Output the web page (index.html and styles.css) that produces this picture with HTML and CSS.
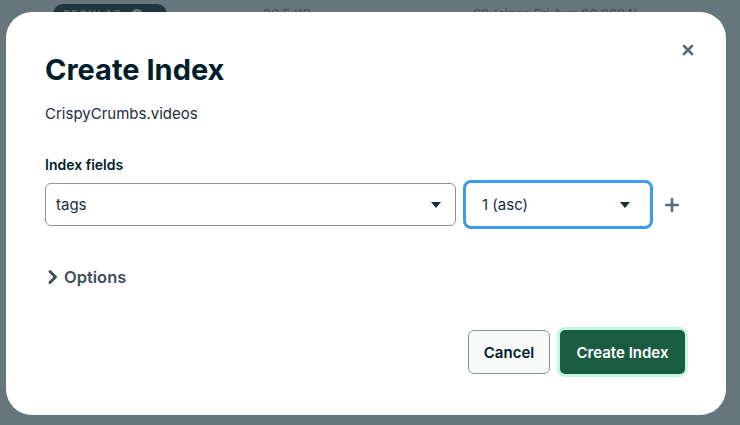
FILE: index.html
```html
<!DOCTYPE html>
<html>
<head>
<meta charset="utf-8">
<link rel="stylesheet" href="styles.css">
</head>
<body>
<div class="backdrop-row">
  <span class="badge">REGULAR <span class="badge-i">i</span></span>
  <span class="bg-size">20.5 KB</span>
  <span class="bg-usage">96 (since Fri Aug 02 2024)</span>
</div>
<div class="modal">
  <button class="close" aria-label="Close">
    <svg width="12" height="12" viewBox="0 0 12 12"><path d="M2 2 L10 10 M10 2 L2 10" stroke="#5c6c75" stroke-width="2.6" stroke-linecap="round"/></svg>
  </button>
  <h1 class="title">Create Index</h1>
  <div class="ns">CrispyCrumbs.videos</div>
  <div class="label">Index fields</div>
  <div class="fields">
    <div class="select field">
      <span>tags</span>
      <svg class="caret" width="10" height="6" viewBox="0 0 10 6"><path d="M0 0 H10 L5 6 Z" fill="#1c2d38"/></svg>
    </div>
    <div class="select type">
      <span>1 (asc)</span>
      <svg class="caret" width="10" height="6" viewBox="0 0 10 6"><path d="M0 0 H10 L5 6 Z" fill="#1c2d38"/></svg>
    </div>
    <svg class="plus" width="14" height="14" viewBox="0 0 14 14"><path d="M7 1 V13 M1 7 H13" stroke="#5c6c75" stroke-width="2.6" stroke-linecap="round"/></svg>
  </div>
  <div class="options">
    <svg width="11" height="16" viewBox="0 0 11 16"><path d="M3 2.5 L8.5 8 L3 13.5" stroke="#3d4f58" stroke-width="3" fill="none" stroke-linecap="round" stroke-linejoin="round"/></svg>
    <span>Options</span>
  </div>
  <div class="footer">
    <button class="btn cancel">Cancel</button>
    <button class="btn primary">Create Index</button>
  </div>
</div>
</body>
</html>
```
FILE: styles.css
```css
* { box-sizing: border-box; }
html, body { margin: 0; padding: 0; }
body {
  width: 740px;
  height: 425px;
  background: #67767c;
  font-family: "Inter", "Lato", sans-serif;
  position: relative;
  overflow: hidden;
}
.backdrop-row {
  display: flex;
  align-items: center;
  height: 22px;
  padding-left: 53px;
  padding-top: 6px;
  color: #3a4a52;
  font-size: 13px;
}
.badge {
  background: #1f3540;
  color: #55666e;
  border-radius: 12px;
  padding: 3px 10px;
  font-size: 11px;
  font-weight: 700;
  letter-spacing: 1px;
  width: 114px;
}
.badge-i {
  display: inline-block;
  width: 12px; height: 12px;
  border-radius: 50%;
  background: #6a7a80;
  color: #1f3540;
  text-align: center;
  font-size: 9px;
  line-height: 12px;
  margin-left: 6px;
  letter-spacing: 0;
}
.bg-size { margin-left: 96px; width: 210px; }
.modal {
  position: absolute;
  left: 6px;
  top: 12px;
  width: 720px;
  height: 403px;
  background: #fff;
  border-radius: 26px;
  padding: 40px 38px 0 39px;
  color: #001e2b;
}
.close {
  position: absolute;
  right: 32px;
  top: 32px;
  border: none;
  background: none;
  padding: 0;
  width: 12px;
  height: 12px;
  display: flex;
}
.title {
  margin: 0;
  font-size: 29px;
  font-weight: 700;
  line-height: 36px;
  color: #001e2b;
  letter-spacing: 0;
}
.ns {
  margin-top: 16px;
  font-size: 15px;
  line-height: 20px;
  color: #1c2d38;
}
.label {
  margin-top: 31px;
  font-size: 14px;
  font-weight: 600;
  line-height: 20px;
  color: #001e2b;
}
.fields {
  margin-top: 5px;
  display: flex;
  align-items: center;
  gap: 7px;
}
.select {
  display: flex;
  align-items: center;
  justify-content: space-between;
  background: #fff;
  font-size: 15px;
  color: #1c2d38;
}
.field {
  width: 411px;
  height: 43px;
  border: 1px solid #889397;
  border-radius: 6px;
  padding: 0 14px 0 10px;
}
.type {
  width: 190px;
  height: 49px;
  border: 3px solid #3d9be9;
  border-radius: 8px;
  padding: 0 20px 0 16px;
}
.plus { margin-left: 5px; }
.options {
  margin-top: 38px;
  display: flex;
  align-items: center;
  gap: 6px;
  font-size: 16.5px;
  font-weight: 600;
  color: #3d4f58;
  padding-left: 2px;
}
.footer {
  margin-top: 40px;
  display: flex;
  justify-content: flex-end;
  align-items: center;
  gap: 7px;
}
.btn {
  font-family: inherit;
  font-size: 15px;
  font-weight: 600;
  cursor: pointer;
}
.cancel {
  width: 82px;
  height: 44px;
  background: #f9fbfa;
  color: #001e2b;
  border: 1px solid #889397;
  border-radius: 6px;
}
.primary {
  width: 131px;
  height: 50px;
  background: #1a5c40;
  color: #fff;
  border: 3px solid #c3f7e3;
  border-radius: 8px;
}
```
